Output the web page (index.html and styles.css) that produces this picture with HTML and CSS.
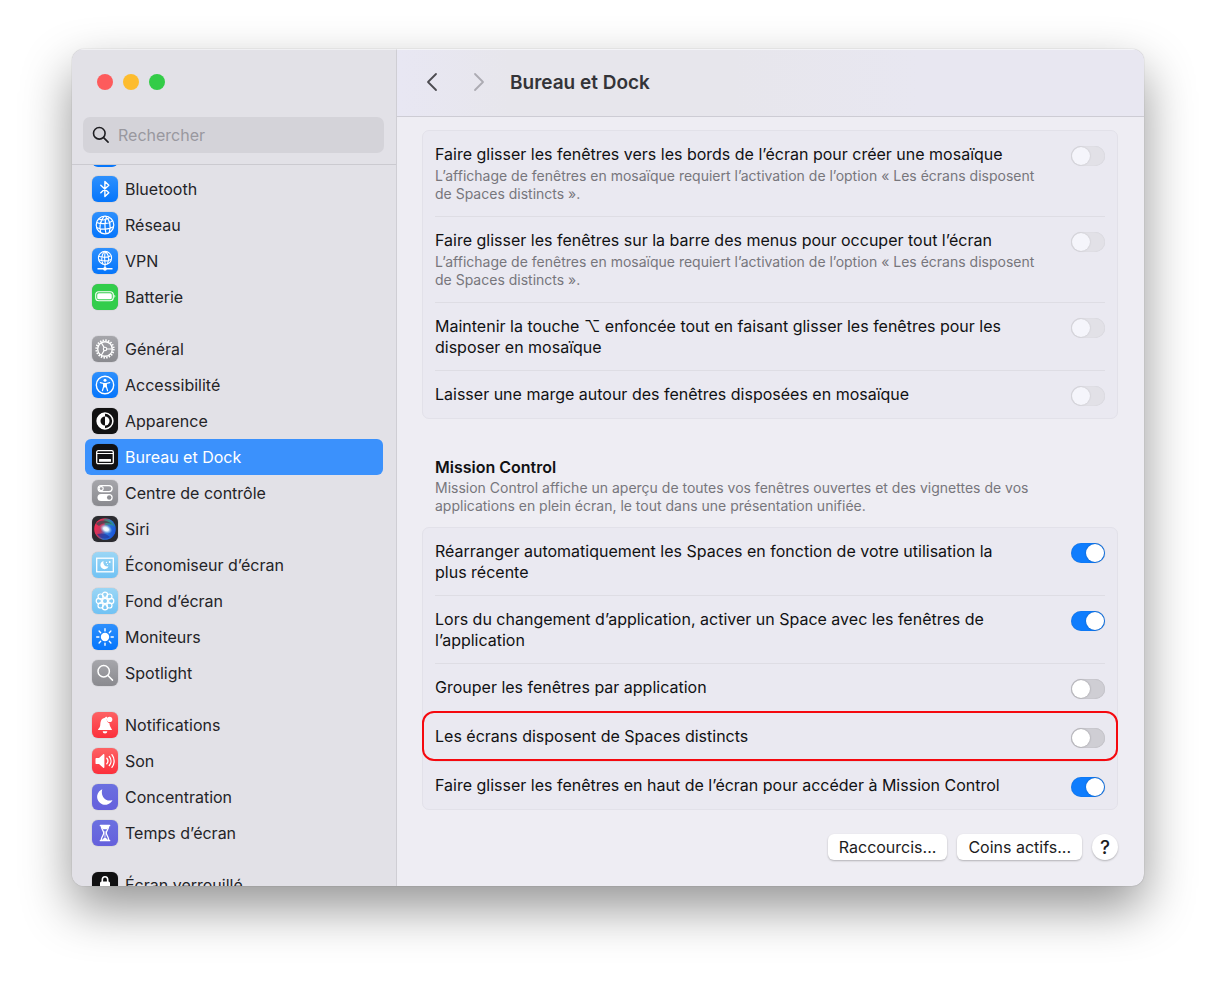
FILE: index.html
```html
<!DOCTYPE html>
<html lang="fr">
<head>
    <meta charset="UTF-8">
    <meta name="viewport" content="width=device-width, initial-scale=1.0">
    <title>Bureau et Dock</title>
    <link rel="stylesheet" href="styles.css">
</head>
<body>

    <div class="window">
        <aside class="sidebar">
            <div class="lights">
                <button class="light red" aria-label="Fermer"></button>
                <button class="light yellow" aria-label="Réduire"></button>
                <button class="light green" aria-label="Agrandir"></button>
            </div>
            <label class="search">
                <svg width="18" height="18" viewBox="0 0 18 18" fill="none" stroke="#1f1f23" stroke-width="1.6" stroke-linecap="round"><circle cx="7.3" cy="7.3" r="5.8"/><path d="M11.6 11.6l4.5 4.5"/></svg>
                <input type="text" placeholder="Rechercher" aria-label="Rechercher">
            </label>

            <nav class="list">
                <div class="item cut"><span class="icon blue"></span></div>
                <a href="#" class="item">
                    <span class="icon blue"><svg viewBox="0 0 26 26" fill="none" stroke="#fff" stroke-width="1.4" stroke-linejoin="round" stroke-linecap="round"><path d="M8.8 9.2l8 7.6-3.9 3.8V5.4l3.9 3.8-8 7.6"/></svg></span>
                    Bluetooth
                </a>
                <a href="#" class="item">
                    <span class="icon blue"><svg viewBox="0 0 26 26" fill="none" stroke="#fff" stroke-width="1.2"><circle cx="13" cy="13" r="8.8"/><path d="M12 4.4c-4 5-5 10-3.4 16.1M13.5 4.3c4 3.5 5.8 9.2 3.7 16.2M14.5 4.5c-1.5 4.5-1.8 12-.5 17M4.5 10.5c5 2 12 1.5 16-1.6M4.5 15.5c5 2.5 13 2 17-.8M7 7c3 1.5 7.5 1 10.5-1.5"/></svg></span>
                    Réseau
                </a>
                <a href="#" class="item">
                    <span class="icon blue"><svg viewBox="0 0 26 26" fill="none" stroke="#fff" stroke-width="1.1"><circle cx="13" cy="10" r="6.6"/><path d="M12.5 3.5c-3 3.5-3.5 8-1.5 12.8M13.5 3.5c3 3 4 8 1.8 12.6M13.3 3.5c-.8 4-.8 9 0 13M6.8 8.3c3.5 1.5 9 1.3 11.8-.6M6.8 11.8c3.5 1.6 9 1.4 12.3-.4M13 16.5v3"/><path d="M5.5 20.8h15" stroke-width="1.4"/><circle cx="13" cy="20.8" r="1.3" fill="#fff"/></svg></span>
                    VPN
                </a>
                <a href="#" class="item">
                    <span class="icon green-bg"><svg viewBox="0 0 26 26"><rect x="3.7" y="7.8" width="17.6" height="9" rx="3" fill="none" stroke="#fff" stroke-width="1.1"/><rect x="5.2" y="9.3" width="14.6" height="6" rx="1.6" fill="#fff"/><path d="M22.4 10.8v3c1.2-.5 1.2-2.5 0-3z" fill="#fff"/></svg></span>
                    Batterie
                </a>

                <a href="#" class="item first">
                    <span class="icon gray"><svg viewBox="0 0 26 26" fill="none" stroke="#fff"><circle cx="13" cy="13" r="8.7" stroke-width="1.9" stroke-dasharray="1.5 1.233"/><circle cx="13" cy="13" r="7.3" stroke-width="1.4"/><circle cx="13" cy="13" r="1.7" stroke-width="1.1"/><path d="M14.8 13h5.5M12.1 11.4L9.3 6.7M12.1 14.6l-2.8 4.7" stroke-width="1.2"/></svg></span>
                    Général
                </a>
                <a href="#" class="item">
                    <span class="icon blue"><svg viewBox="0 0 26 26"><circle cx="13" cy="13" r="8.7" fill="none" stroke="#fff" stroke-width="1.4"/><circle cx="13" cy="8.3" r="1.5" fill="#fff"/><path d="M8.3 10.7l3.4.8v3l-1.3 4.2M17.7 10.7l-3.4.8v3l1.3 4.2M11.7 11.5h2.6v3.2h-2.6z" fill="none" stroke="#fff" stroke-width="1.2" stroke-linecap="round" stroke-linejoin="round"/><path d="M11.5 11.3h3v4h-3z" fill="#fff"/></svg></span>
                    Accessibilité
                </a>
                <a href="#" class="item">
                    <span class="icon black"><svg viewBox="0 0 26 26"><circle cx="13" cy="13" r="7.9" fill="none" stroke="#fff" stroke-width="1.5"/><path d="M13 5a8 8 0 0 0 0 16v-3.500a4.500 4.500 0 0 1 0-9z" fill="#fff"/><path d="M13 8.5a4.500 4.500 0 0 1 0 9z" fill="#fff"/></svg></span>
                    Apparence
                </a>
                <a href="#" class="item selected">
                    <span class="icon black"><svg viewBox="0 0 26 26"><rect x="4.7" y="6.7" width="16.6" height="13" rx="1.5" fill="none" stroke="#fff" stroke-width="1.3"/><path d="M5 9.5h16" stroke="#fff" stroke-width="1"/><rect x="7" y="15" width="12" height="2.8" rx=".5" fill="#fff"/></svg></span>
                    Bureau et Dock
                </a>
                <a href="#" class="item">
                    <span class="icon gray"><svg viewBox="0 0 26 26"><rect x="6.1" y="5.6" width="14" height="6" rx="3" fill="none" stroke="#fff" stroke-width="1.3"/><circle cx="9.2" cy="8.6" r="2" fill="none" stroke="#fff" stroke-width="1.1"/><rect x="5.5" y="14" width="15.2" height="7" rx="3.5" fill="#fff"/><circle cx="17.2" cy="17.5" r="2.2" fill="#8f8f94"/></svg></span>
                    Centre de contrôle
                </a>
                <a href="#" class="item">
                    <span class="icon siri"><svg viewBox="0 0 26 26">
                        <defs>
                            <radialGradient id="glow"><stop offset="0" stop-color="#fff"/><stop offset=".4" stop-color="#e5f4ff"/><stop offset="1" stop-color="#8ac4f0" stop-opacity="0"/></radialGradient>
                            <linearGradient id="orb" x1="0" y1=".3" x2="1" y2=".7"><stop offset="0" stop-color="#ff2850"/><stop offset=".35" stop-color="#c03a60"/><stop offset=".6" stop-color="#3178d8"/><stop offset="1" stop-color="#1550dd"/></linearGradient>
                        </defs>
                        <circle cx="13" cy="13" r="10.8" fill="url(#orb)"/>
                        <path d="M12 3c5 0 9 2.5 11 8-3-3-7-3.5-10-1z" fill="#2b9b77" opacity=".7"/>
                        <path d="M4 8c4-5 11-4 16 0-5-2-10-1-13 2z" fill="#45454d" opacity=".8"/>
                        <path d="M5 18c5-1 9-1 13 3-4 3-10 2-13-3z" fill="#2034a0" opacity=".7"/>
                        <ellipse cx="14" cy="13" rx="6.5" ry="4.5" fill="url(#glow)" transform="rotate(25 14 13)"/>
                    </svg></span>
                    Siri
                </a>
                <a href="#" class="item">
                    <span class="icon sky"><svg viewBox="0 0 26 26"><rect x="4.7" y="6.2" width="16.6" height="13.6" fill="none" stroke="#fff" stroke-width="1.3"/><path d="M11.5 8.9a4.2 4.2 0 1 0 5 5.5 4.2 4.2 0 0 1-5-5.5z" fill="#fff"/><circle cx="14.5" cy="10.5" r=".7" fill="#fff"/><circle cx="17.7" cy="10" r=".9" fill="#fff"/><circle cx="15.5" cy="12.5" r=".6" fill="#fff"/></svg></span>
                    Économiseur d’écran
                </a>
                <a href="#" class="item">
                    <span class="icon sky"><svg viewBox="0 0 26 26" fill="none" stroke="#fff" stroke-width="1.2"><circle cx="13" cy="13" r="2.6"/><circle cx="13" cy="6.8" r="2.6"/><circle cx="17.4" cy="8.6" r="2.6"/><circle cx="19.2" cy="13" r="2.6"/><circle cx="17.4" cy="17.4" r="2.6"/><circle cx="13" cy="19.2" r="2.6"/><circle cx="8.6" cy="17.4" r="2.6"/><circle cx="6.8" cy="13" r="2.6"/><circle cx="8.6" cy="8.6" r="2.6"/></svg></span>
                    Fond d’écran
                </a>
                <a href="#" class="item">
                    <span class="icon blue"><svg viewBox="0 0 26 26"><circle cx="13" cy="13" r="4.2" fill="#fff"/><path d="M13 4.7v2.2M13 19.1v2.2M4.7 13h2.2M19.1 13h2.2M7.1 7.1l1.6 1.6M17.3 17.3l1.6 1.6M18.9 7.1l-1.6 1.6M8.7 17.3l-1.6 1.6" stroke="#fff" stroke-width="1.4" stroke-linecap="round"/></svg></span>
                    Moniteurs
                </a>
                <a href="#" class="item">
                    <span class="icon gray"><svg viewBox="0 0 26 26" fill="none" stroke="#fff" stroke-width="1.5" stroke-linecap="round"><circle cx="11.7" cy="11.3" r="5.7"/><path d="M15.9 15.5l4.6 4.6"/></svg></span>
                    Spotlight
                </a>

                <a href="#" class="item first">
                    <span class="icon red-bg"><svg viewBox="0 0 26 26"><path d="M6 18c0-1.4 2-2 2.2-4.5.3-3.5.5-7 4.8-7.7.6-1.6 2.3-1 2.2.2a3.6 3.6 0 0 0 2.3 5.2c.2 4 2.5 5.4 2.5 6.8z" fill="#fff"/><path d="M10.7 19.3h4.6a2.3 2.3 0 0 1-4.6 0z" fill="#fff"/><circle cx="17.6" cy="7.4" r="2.7" fill="#fff"/></svg></span>
                    Notifications
                </a>
                <a href="#" class="item">
                    <span class="icon red-bg"><svg viewBox="0 0 26 26"><path d="M3.5 10.8c0-.6.4-.9.9-.9H7l4.2-3.7c.5-.4 1.2-.1 1.2.5v12.6c0 .6-.7.9-1.2.5L7 16.1H4.4c-.5 0-.9-.3-.9-.9z" fill="#fff"/><path d="M14.8 10.3c1.3 1.5 1.3 3.9 0 5.4M17.3 8.5c2.2 2.6 2.2 6.4 0 9M19.9 6.7c3 3.7 3 8.9 0 12.6" fill="none" stroke="#fff" stroke-width="1.3" stroke-linecap="round"/></svg></span>
                    Son
                </a>
                <a href="#" class="item">
                    <span class="icon purple"><svg viewBox="0 0 26 26"><path d="M10.3 5.3a8 8 0 1 0 10.2 10.6c-5.8 2.8-12.5-3.2-10.2-10.6z" fill="#fff"/></svg></span>
                    Concentration
                </a>
                <a href="#" class="item">
                    <span class="icon purple"><svg viewBox="0 0 26 26"><path d="M8.5 5.5h9M8.5 20.5h9" stroke="#fff" stroke-width="1.7" stroke-linecap="round"/><path d="M9.2 5.5c0 4 2.5 5 2.5 7.5s-2.5 3.5-2.5 7.5h7.6c0-4-2.5-5-2.5-7.5s2.5-3.500 2.5-7.5z" fill="none" stroke="#fff" stroke-width="1.2"/><path d="M9.5 6h7l-1 3.3h-5zM10 20.5c.5-2 3-3 3-3s2.5 1 3 3zM12.6 11h.8v7h-.8z" fill="#fff"/></svg></span>
                    Temps d’écran
                </a>

                <a href="#" class="item first">
                    <span class="icon black"><svg viewBox="0 0 26 26"><path d="M10.3 12V7.7c0-4 5.4-4 5.4 0V12" fill="none" stroke="#fff" stroke-width="1.6"/><rect x="8" y="9.5" width="10" height="9" rx="1.5" fill="#fff"/></svg></span>
                    Écran verrouillé
                </a>
            </nav>
        </aside>

        <main class="main">
            <header class="topbar">
                <button class="nav-btn" aria-label="Précédent"><svg width="12" height="20" viewBox="0 0 12 20"><path d="M10 2L2 10l8 8"/></svg></button>
                <button class="nav-btn off" aria-label="Suivant" disabled><svg width="12" height="20" viewBox="0 0 12 20"><path d="M2 2l8 8-8 8"/></svg></button>
                <h1>Bureau et Dock</h1>
            </header>

            <div class="content">
                <section class="card">
                    <div class="row">
                        <label for="edges">Faire glisser les fenêtres vers les bords de l’écran pour créer une mosaïque
                            <small>L’affichage de fenêtres en mosaïque requiert l’activation de l’option «&nbsp;Les écrans disposent de Spaces distincts&nbsp;».</small>
                        </label>
                        <input type="checkbox" id="edges" class="toggle" disabled>
                    </div>
                    <div class="row">
                        <label for="menubar">Faire glisser les fenêtres sur la barre des menus pour occuper tout l’écran
                            <small>L’affichage de fenêtres en mosaïque requiert l’activation de l’option «&nbsp;Les écrans disposent de Spaces distincts&nbsp;».</small>
                        </label>
                        <input type="checkbox" id="menubar" class="toggle" disabled>
                    </div>
                    <div class="row">
                        <label for="option">Maintenir la touche ⌥ enfoncée tout en faisant glisser les fenêtres pour les disposer en mosaïque</label>
                        <input type="checkbox" id="option" class="toggle" disabled>
                    </div>
                    <div class="row">
                        <label for="margin">Laisser une marge autour des fenêtres disposées en mosaïque</label>
                        <input type="checkbox" id="margin" class="toggle" disabled>
                    </div>
                </section>

                <div class="section-head">
                    <h2>Mission Control</h2>
                    <p>Mission Control affiche un aperçu de toutes vos fenêtres ouvertes et des vignettes de vos applications en plein écran, le tout dans une présentation unifiée.</p>
                </div>

                <section class="card">
                    <div class="row">
                        <label for="rearrange">Réarranger automatiquement les Spaces en fonction de votre utilisation la plus récente</label>
                        <input type="checkbox" id="rearrange" class="toggle" checked>
                    </div>
                    <div class="row">
                        <label for="switch">Lors du changement d’application, activer un Space avec les fenêtres de l’application</label>
                        <input type="checkbox" id="switch" class="toggle" checked>
                    </div>
                    <div class="row">
                        <label for="group">Grouper les fenêtres par application</label>
                        <input type="checkbox" id="group" class="toggle">
                    </div>
                    <div class="row marked">
                        <label for="spaces">Les écrans disposent de Spaces distincts</label>
                        <input type="checkbox" id="spaces" class="toggle">
                    </div>
                    <div class="row">
                        <label for="drag">Faire glisser les fenêtres en haut de l’écran pour accéder à Mission Control</label>
                        <input type="checkbox" id="drag" class="toggle" checked>
                    </div>
                </section>

                <div class="actions">
                    <button class="btn">Raccourcis...</button>
                    <button class="btn">Coins actifs...</button>
                    <button class="btn help" aria-label="Aide">?</button>
                </div>
            </div>
        </main>
    </div>

</body>
</html>
```
FILE: styles.css
```css
* {
    box-sizing: border-box;
}

body {
    margin: 0;
    padding: 49px 72px 95px;
    background-color: #fff;
    color: #1c1c1e;
    font-family: Inter, "DejaVu Sans", sans-serif;
    font-size: 16px;
    line-height: 21px;
    overflow: hidden;
}

button, input {
    font: inherit;
    color: inherit;
}

.window {
    display: flex;
    height: calc(100vh - 144px);
    min-width: 800px;
    border-radius: 12px;
    overflow: hidden;
    background-color: #eeedf3;
    box-shadow: 0 0 1px rgba(0, 0, 0, 0.4), 0 22px 50px rgba(0, 0, 0, 0.42);
}

/* Sidebar */
.sidebar {
    display: flex;
    flex-direction: column;
    width: 325px;
    flex-shrink: 0;
    background-color: #e2e1e7;
    border-right: 1px solid #cfced4;
    border-top: 1px solid #f0f0f3;
}

.lights {
    display: flex;
    gap: 10px;
    padding: 24px 25px;
}

.light {
    width: 16px;
    height: 16px;
    padding: 0;
    border: none;
    border-radius: 50%;
}

.red {
    background-color: #fd5b5c;
}

.yellow {
    background-color: #fdbc2e;
}

.green {
    background-color: #33cc47;
}

.search {
    display: flex;
    align-items: center;
    gap: 8px;
    height: 36px;
    margin: 3px 12px 11px 11px;
    padding: 0 9px;
    border-radius: 7px;
    background-color: #d4d3d9;
}

.search input {
    flex: 1;
    min-width: 0;
    padding: 0;
    border: none;
    background: none;
    outline: none;
}

.search input::placeholder {
    color: #99989f;
    opacity: 1;
}

.list {
    flex: 1;
    min-height: 0;
    overflow: hidden;
    padding: 0 13px;
    border-top: 1px solid #cbcad0;
}

.item {
    display: flex;
    align-items: center;
    gap: 7px;
    height: 36px;
    padding: 0 7px;
    border-radius: 6px;
    color: #242427;
    text-decoration: none;
}

.item.cut {
    align-items: flex-end;
    height: 6px;
    padding-bottom: 4px;
}

.item.first {
    margin-top: 16px;
}

.item.selected {
    background-color: #3b91fc;
    color: #fff;
}

.icon {
    flex-shrink: 0;
    width: 26px;
    height: 26px;
    border-radius: 6px;
    overflow: hidden;
    box-shadow: 0 0 1px rgba(0, 0, 0, 0.4);
}

.cut .icon {
    box-shadow: none;
}

.icon svg {
    display: block;
    width: 26px;
    height: 26px;
}

.blue {
    background: linear-gradient(#2e90fd, #0575fb);
}

.green-bg {
    background-color: #32cd4b;
}

.gray {
    background: linear-gradient(#a6a6ab, #8a8a8f);
}

.black {
    background-color: #111112;
}

.siri {
    background-color: #2b2b30;
}

.sky {
    background: linear-gradient(#9bd6f5, #70c2f4);
}

.red-bg {
    background: linear-gradient(#fd6264, #fc2f3b);
}

.purple {
    background: linear-gradient(#6b70e0, #6560dc);
}

/* Right pane */
.main {
    display: flex;
    flex-direction: column;
    flex: 1;
    min-width: 0;
}

.topbar {
    display: flex;
    align-items: center;
    gap: 35px;
    height: 68px;
    padding: 0 29px 2px;
    flex-shrink: 0;
    background: linear-gradient(90deg, #e8e7f3, #e7e6ec 15%, #e7e6ec 45%, #e8e7f1 70%);
    border-top: 1px solid #f4f4f8;
    border-bottom: 1px solid #cdccd4;
}

.topbar h1 {
    margin: 0 0 0 -10px;
    font-size: 19px;
    font-weight: 600;
    color: #343438;
}

.nav-btn {
    display: flex;
    padding: 0;
    border: none;
    background: none;
}

.nav-btn path {
    fill: none;
    stroke: #4c4b50;
    stroke-width: 1.8;
    stroke-linecap: round;
    stroke-linejoin: round;
}

.nav-btn.off path {
    stroke: #acabb2;
}

.content {
    flex: 1;
    min-height: 0;
    overflow: hidden;
    padding: 13px 26px 25px 25px;
}

.card {
    padding: 0 12px;
    background-color: #eae9f1;
    border: 1px solid #e2e1e9;
    border-radius: 7px;
    color: #111113;
}

.row {
    display: flex;
    align-items: flex-start;
    justify-content: space-between;
    gap: 20px;
    min-height: 49px;
    padding: 13px 0 12px;
}

.row:last-child {
    min-height: 48px;
}

.row + .row {
    border-top: 1px solid #dedde4;
}

.row label {
    max-width: 590px;
}

.row small {
    display: block;
    width: 610px;
    margin: 2px 0 1px;
}

.row small,
.section-head p {
    font-size: 14px;
    line-height: 18px;
    color: #77767c;
}

/* red frame drawn over the row and the card's edges */
.marked {
    position: relative;
}

.marked::after {
    content: "";
    position: absolute;
    inset: -2px -13px 0;
    border: 2px solid #f5090f;
    border-radius: 12px;
    pointer-events: none;
}

.toggle {
    appearance: none;
    flex-shrink: 0;
    display: flex;
    width: 34px;
    height: 20px;
    margin: 2px 0 0;
    padding: 1px;
    border-radius: 10px;
    background-color: #cfced4;
    box-shadow: inset 0 0 1px rgba(0, 0, 0, 0.3);
}

.toggle::before {
    content: "";
    width: 18px;
    height: 18px;
    border-radius: 50%;
    background-color: #fff;
    box-shadow: 0 0 2px rgba(0, 0, 0, 0.3);
}

.toggle:checked {
    justify-content: flex-end;
    background-color: #0f7dfd;
}

.toggle:disabled {
    background-color: #e2e1e7;
    box-shadow: inset 0 0 1px rgba(0, 0, 0, 0.15);
}

.toggle:disabled::before {
    background-color: #f5f5fb;
    box-shadow: 0 0 2px rgba(0, 0, 0, 0.15);
}

.section-head {
    padding: 38px 13px 12px;
}

.section-head h2 {
    margin: 0 0 1px;
    font-size: 16px;
    font-weight: 600;
    color: #111113;
}

.section-head p {
    margin: 0;
    max-width: 620px;
}

.actions {
    display: flex;
    justify-content: flex-end;
    gap: 10px;
    padding-top: 24px;
}

.btn {
    height: 26px;
    padding: 0 11px;
    border: none;
    border-radius: 6px;
    background-color: #fff;
    box-shadow: 0 1px 2px rgba(0, 0, 0, 0.25);
}

.btn.help {
    width: 26px;
    padding: 0;
    border-radius: 50%;
    font-size: 19px;
    font-weight: 500;
}
```
